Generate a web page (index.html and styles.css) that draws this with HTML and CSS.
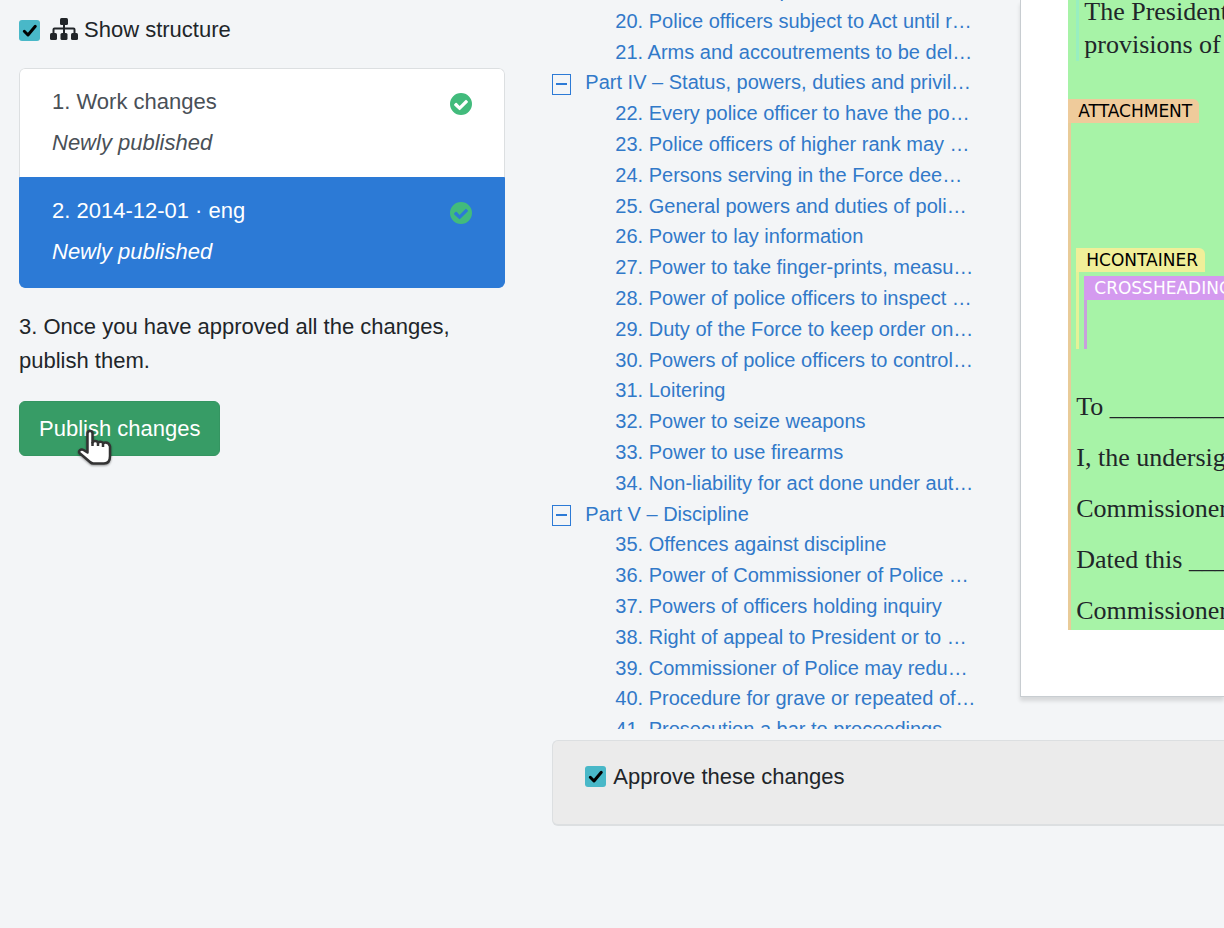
FILE: index.html
```html
<!DOCTYPE html>
<html lang="en">
<head>
    <meta charset="UTF-8">
    <meta name="viewport" content="width=device-width, initial-scale=1.0">
    <title>Publish changes</title>
    <link rel="stylesheet" href="styles.css">
</head>
<body>
    <main class="layout">
        <section class="sidebar">
            <label class="check structure-toggle" for="showStructure">
                <input type="checkbox" id="showStructure" class="checkbox" checked>
                <svg class="sitemap" viewBox="0 0 28 22" aria-hidden="true">
                    <rect x="10" y="0" width="8" height="7" rx="1.5"/>
                    <rect x="0" y="15" width="7" height="7" rx="1.5"/>
                    <rect x="10.5" y="15" width="7" height="7" rx="1.5"/>
                    <rect x="21" y="15" width="7" height="7" rx="1.5"/>
                    <path d="M14 6v10M3.500 16v-4.500q0-1 1-1h19q1 0 1 1V16" fill="none" stroke="currentColor" stroke-width="2"/>
                </svg>
                <span>Show structure</span>
            </label>

            <div class="list-group">
                <a href="#work" class="list-item">
                    <span class="list-text">
                        <span>1. Work changes</span>
                        <em>Newly published</em>
                    </span>
                    <svg class="check-circle" viewBox="0 0 22 22" aria-hidden="true">
                        <path fill-rule="evenodd" d="M11 0a11 11 0 1 0 0 22a11 11 0 1 0 0-22zM4.300 11.200l1.100-1.100q.7-.7 1.400 0l2.800 2.800 5.700-5.700q.7-.7 1.400 0l1 1q.5.6 0 1.200l-7.400 7.400q-.7.7-1.400 0l-4.600-4.400q-.6-.6 0-1.200z"/>
                    </svg>
                </a>
                <a href="#expression" class="list-item active">
                    <span class="list-text">
                        <span>2. 2014-12-01 · eng</span>
                        <em>Newly published</em>
                    </span>
                    <svg class="check-circle" viewBox="0 0 22 22" aria-hidden="true">
                        <path fill-rule="evenodd" d="M11 0a11 11 0 1 0 0 22a11 11 0 1 0 0-22zM4.300 11.200l1.100-1.100q.7-.7 1.400 0l2.800 2.800 5.700-5.700q.7-.7 1.400 0l1 1q.5.6 0 1.200l-7.400 7.400q-.7.7-1.400 0l-4.600-4.400q-.6-.6 0-1.200z"/>
                    </svg>
                </a>
            </div>

            <p class="hint">3. Once you have approved all the changes, publish them.</p>

            <div class="publish">
                <button type="button" class="button">Publish changes</button>
                <svg class="pointer" viewBox="0 0 36 36" aria-hidden="true">
                    <path d="M10.500 22.500V3.500q0-2.500 2.500-2.500t2.500 2.500v9q.8-1.500 2.700-1.500 2.100 0 2.800 1.700.8-1 2.500-1 2 0 2.600 1.700.9-.8 2.500-.8 3.400 0 4.400 3.800V26q0 7.500-6 7.500H16.500q-2 0-3.500-1.500L2.500 23q-1-1.300.3-2.700Q4.500 19 6.500 20z"/>
                    <path d="M15.500 12v4M21 13v3M26 14v3" fill="none"/>
                </svg>
            </div>
        </section>

        <section class="content">
            <div class="viewer">
                <nav class="toc">
                    <ul class="toc-list">
                        <li><a href="#s19">19. Termination of powers</a></li>
                        <li><a href="#s20">20. Police officers subject to Act until r…</a></li>
                        <li><a href="#s21">21. Arms and accoutrements to be del…</a></li>
                        <li class="part">
                            <button type="button" class="toggle" aria-label="Collapse"></button>
                            <a href="#part4">Part IV – Status, powers, duties and privil…</a>
                        </li>
                        <li><a href="#s22">22. Every police officer to have the po…</a></li>
                        <li><a href="#s23">23. Police officers of higher rank may …</a></li>
                        <li><a href="#s24">24. Persons serving in the Force dee…</a></li>
                        <li><a href="#s25">25. General powers and duties of poli…</a></li>
                        <li><a href="#s26">26. Power to lay information</a></li>
                        <li><a href="#s27">27. Power to take finger-prints, measu…</a></li>
                        <li><a href="#s28">28. Power of police officers to inspect …</a></li>
                        <li><a href="#s29">29. Duty of the Force to keep order on…</a></li>
                        <li><a href="#s30">30. Powers of police officers to control…</a></li>
                        <li><a href="#s31">31. Loitering</a></li>
                        <li><a href="#s32">32. Power to seize weapons</a></li>
                        <li><a href="#s33">33. Power to use firearms</a></li>
                        <li><a href="#s34">34. Non-liability for act done under aut…</a></li>
                        <li class="part">
                            <button type="button" class="toggle" aria-label="Collapse"></button>
                            <a href="#part5">Part V – Discipline</a>
                        </li>
                        <li><a href="#s35">35. Offences against discipline</a></li>
                        <li><a href="#s36">36. Power of Commissioner of Police …</a></li>
                        <li><a href="#s37">37. Powers of officers holding inquiry</a></li>
                        <li><a href="#s38">38. Right of appeal to President or to …</a></li>
                        <li><a href="#s39">39. Commissioner of Police may redu…</a></li>
                        <li><a href="#s40">40. Procedure for grave or repeated of…</a></li>
                        <li><a href="#s41">41. Prosecution a bar to proceedings</a></li>
                    </ul>
                </nav>

                <article class="paper">
                    <div class="akn">
                        <div class="akn-section">
                            <p>The President<br>provisions of</p>
                        </div>
                        <div class="attachment">
                            <span class="tag tag-attachment">ATTACHMENT</span>
                            <div class="hcontainer">
                                <span class="tag tag-hcontainer">HCONTAINER</span>
                                <div class="crossheading">
                                    <span class="tag tag-crossheading">CROSSHEADING</span>
                                </div>
                            </div>
                            <div class="form-lines">
                                <p>To ______________</p>
                                <p>I, the undersigned</p>
                                <p>Commissioner</p>
                                <p>Dated this ________</p>
                                <p>Commissioner</p>
                            </div>
                        </div>
                    </div>
                </article>
            </div>

            <div class="approve">
                <label class="check" for="approve">
                    <input type="checkbox" id="approve" class="checkbox" checked>
                    <span>Approve these changes</span>
                </label>
            </div>
        </section>
    </main>
</body>
</html>
```
FILE: styles.css
```css
:root {
    --bg-color: #f3f5f7;
    --text-color: #212529;
    --blue: #2c7ad6;
    --link: #3179c9;
    --green: #379c66;
    --border: #dcdfe1;
}

* {
    box-sizing: border-box;
}

body {
    margin: 0;
    font-family: "Liberation Sans", Arial, sans-serif;
    font-size: 22px;
    line-height: 33px;
    background-color: var(--bg-color);
    color: var(--text-color);
    overflow: hidden;
}

a {
    color: inherit;
    text-decoration: none;
}

.layout {
    display: grid;
    grid-template-columns: minmax(0, 42fr) minmax(0, 58fr);
    gap: 47px;
    padding-left: 19px;
}

/* left column */
.sidebar {
    padding-top: 13px;
}

.check {
    display: flex;
    align-items: center;
    gap: 7px;
}

.checkbox {
    appearance: none;
    flex: none;
    width: 21px;
    height: 21px;
    margin: 0;
    border-radius: 3px;
    background: #49b8c8;
}

.checkbox:checked {
    background-image: url("data:image/svg+xml,%3Csvg xmlns='http://www.w3.org/2000/svg' viewBox='0 0 21 21'%3E%3Cpath d='M5.300 11.300l3.700 3.700 7.300-8.700' fill='none' stroke='%23000' stroke-width='3' stroke-linecap='round' stroke-linejoin='round'/%3E%3C/svg%3E");
}

.structure-toggle {
    gap: 6px;
}

.structure-toggle .checkbox {
    margin-top: 2px;
}

.structure-toggle .sitemap {
    width: 28px;
    height: 22px;
    margin: 0 0 2px 4px;
    fill: currentColor;
}

.list-group {
    margin-top: 22px;
    border-radius: 6px;
    overflow: hidden;
}

.list-item {
    display: flex;
    justify-content: space-between;
    padding: 16px 32px 18px;
    background: #fff;
    border: 1px solid var(--border);
    border-bottom: 0;
    border-radius: 6px 6px 0 0;
    color: #495057;
}

.list-item.active {
    padding-bottom: 19px;
    background: var(--blue);
    border: 1px solid var(--blue);
    border-radius: 0 0 6px 6px;
    color: #fff;
}

.list-text {
    display: grid;
    gap: 8px;
}

.check-circle {
    width: 22px;
    height: 22px;
    margin-top: 8px;
    fill: #42bb7c;
}

.hint {
    margin: 22px 0 23px;
    line-height: 34px;
}

.publish {
    position: relative;
    display: inline-block;
}

.button {
    display: block;
    padding: 10px 19px;
    border: 1px solid #349561;
    border-radius: 6px;
    background: var(--green);
    color: #fff;
    font: inherit;
    cursor: pointer;
}

.pointer {
    position: absolute;
    left: 58px;
    top: 29px;
    width: 36px;
    height: 36px;
    fill: #fff;
    stroke: #333;
    stroke-width: 2.5;
    stroke-linejoin: round;
    filter: drop-shadow(0 1px 1px rgba(0, 0, 0, 0.4));
    overflow: visible;
    pointer-events: none;
}

/* right column */
.viewer {
    display: grid;
    grid-template-columns: minmax(0, 68fr) minmax(0, 32fr);
    gap: 35px;
}

/* takes its height from the paper next to it */
.toc {
    contain: size;
    overflow: hidden;
}

.toc-list {
    list-style: none;
    margin: -25px 0 0;
    padding: 0;
    font-size: 20px;
    line-height: 1.54;
    color: var(--link);
    white-space: nowrap;
}

.toc-list li {
    padding-left: 63px;
}

.toc-list .part {
    display: flex;
    align-items: center;
    gap: 14px;
    padding-left: 0;
}

.toggle {
    display: grid;
    place-items: center;
    width: 19px;
    height: 21px;
    margin: 3px 0 0;
    padding: 0;
    border: 1px solid var(--blue);
    background: none;
}

.toggle::before {
    content: "";
    width: 11px;
    height: 2px;
    background: var(--blue);
}

.paper {
    margin-bottom: 32px;
    padding: 0 0 66px 47px;
    background: #fff;
    border: 1px solid #c8cdd1;
    border-width: 0 0 1px 1px;
    box-shadow: 0 4px 4px rgba(0, 0, 0, 0.12);
}

.akn {
    background: #a7f3a7;
    font-family: "Palatino Linotype", Palatino, "Liberation Serif", serif;
    font-size: 26px;
    white-space: nowrap;
    overflow: hidden;
}

.akn p {
    margin: 0;
}

.akn-section {
    margin-left: 8px;
    padding-left: 5px;
    border-left: 3px solid #98efc0;
}

.akn-section p {
    margin-top: -5px;
}

.attachment {
    margin-top: 38px;
    padding: 0 0 3px 5px;
    border-left: 3px solid #e9cb98;
}

.tag {
    display: block;
    width: fit-content;
    padding: 0 7px;
    border-radius: 0 6px 0 0;
    font-family: "DejaVu Sans", sans-serif;
    font-size: 17px;
    line-height: 24px;
    color: #000;
}

.tag-attachment {
    margin-left: -8px;
    padding-left: 10px;
    background: #efcb9b;
}

.hcontainer {
    margin-top: 125px;
    padding-left: 5px;
    border-left: 3px solid #e5f297;
}

.tag-hcontainer {
    margin-left: -8px;
    padding-left: 10px;
    background: #f0ef99;
}

.crossheading {
    height: 73px;
    margin-top: 4px;
    border-left: 3px solid #c8a0dc;
}

.tag-crossheading {
    margin-left: -3px;
    padding-left: 10px;
    background: #d49aef;
    color: #fff;
}

.form-lines {
    display: grid;
    gap: 18px;
    padding-top: 41px;
}

.approve {
    margin-top: 11px;
    padding: 19px 32px 31px;
    background: #ebebeb;
    border: 1px solid var(--border);
    border-right: 0;
    border-bottom-width: 2px;
    border-radius: 6px 0 0 6px;
}
```
